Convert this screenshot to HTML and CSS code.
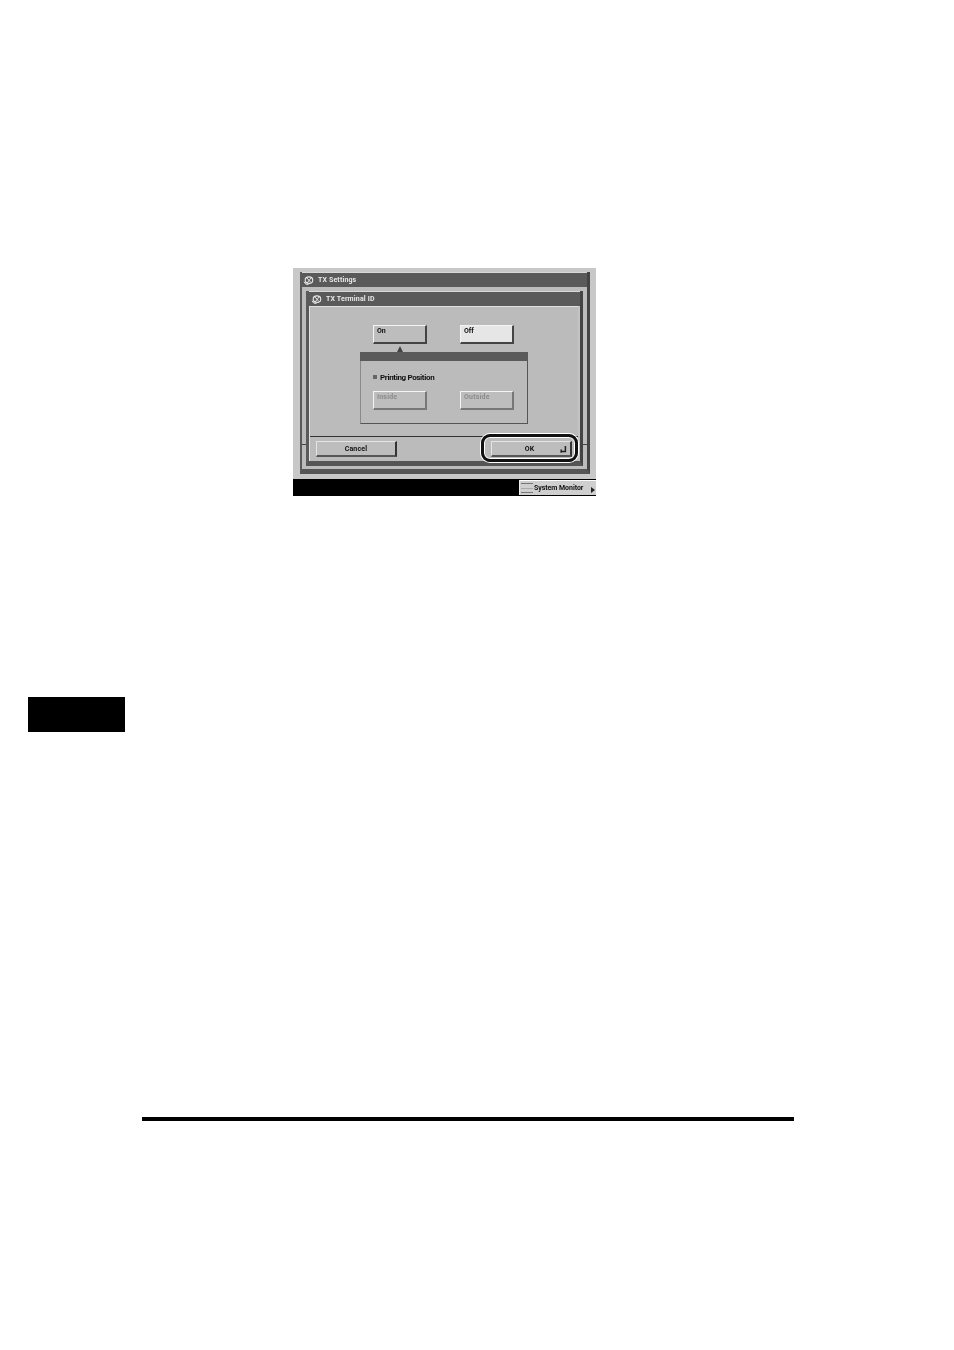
FILE: index.html
```html
<!DOCTYPE html>
<html lang="en">
<head>
    <meta charset="UTF-8">
    <meta name="viewport" content="width=device-width, initial-scale=1.0">
    <title>TX Terminal ID</title>
    <link rel="stylesheet" href="styles.css">
</head>
<body>
    <div class="screen">
        <div class="window-outer">
            <div class="title-bar title-outer">
                <svg class="logo" viewBox="0 0 12 10"><ellipse cx="6.5" cy="4.6" rx="4.2" ry="3.6" fill="none" stroke="#e8e8e8" stroke-width="1.2"/><path d="M4 2 L9 7.4 M9 2 L4.6 7.6 M1 6.4 L3 9 L6 9.4" fill="none" stroke="#e8e8e8" stroke-width="1.1"/></svg>
                <span>TX Settings</span>
            </div>
            <div class="window-outer-body">
                <div class="window-inner">
                    <div class="title-bar title-inner">
                        <svg class="logo" viewBox="0 0 12 10"><ellipse cx="6.5" cy="4.6" rx="4.2" ry="3.6" fill="none" stroke="#e8e8e8" stroke-width="1.2"/><path d="M4 2 L9 7.4 M9 2 L4.6 7.6 M1 6.4 L3 9 L6 9.4" fill="none" stroke="#e8e8e8" stroke-width="1.1"/></svg>
                        <span>TX Terminal ID</span>
                    </div>
                    <div class="content">
                        <div class="content-main">
                            <div class="button-row top-row">
                                <div class="btn">On</div>
                                <div class="btn btn-selected">Off</div>
                            </div>
                            <div class="pointer"></div>
                            <div class="sub-panel">
                                <div class="sub-header"></div>
                                <div class="sub-label"><span class="bullet"></span>Printing Position</div>
                                <div class="button-row sub-row">
                                    <div class="btn btn-disabled">Inside</div>
                                    <div class="btn btn-disabled">Outside</div>
                                </div>
                            </div>
                        </div>
                        <div class="footer">
                            <div class="btn btn-wide">Cancel</div>
                            <div class="btn btn-wide btn-ok">OK
                                <svg class="return-icon" viewBox="0 0 7 7"><path d="M5.4 0 V5.4 H0.6 M1.2 3.6 V6.8" fill="none" stroke="#222" stroke-width="1.5"/></svg>
                            </div>
                        </div>
                    </div>
                    <div class="callout"></div>
                </div>
                <div class="tick tick-left"></div>
                <div class="tick tick-right"></div>
            </div>
        </div>
        <div class="status-bar">
            <div class="monitor-btn">
                <span class="monitor-icon"></span>
                <span class="monitor-text">System Monitor</span>
                <span class="monitor-arrow"></span>
            </div>
        </div>
    </div>

    <div class="side-tab"></div>
    <div class="bottom-rule"></div>
</body>
</html>
```

FILE: styles.css
```css
body {
    margin: 0;
    padding: 268px 0 0;
    background-color: #fff;
    font-family: Roboto, "Liberation Sans", sans-serif;
}

.screen {
    width: 303px;
    height: 228px;
    margin-left: 293px;
    padding-top: 4px;
    box-sizing: border-box;
    background-color: #c8c8c8;
    display: flex;
    flex-direction: column;
    filter: blur(0.35px);
}

.window-outer {
    height: 202px;
    margin: 0 6px 0 7px;
    box-sizing: border-box;
    background-color: #bcbcbc;
    border-left: 2px solid #5a5a5a;
    border-right: 3px solid #444;
    border-bottom: 5px solid #555;
    display: flex;
    flex-direction: column;
}

.title-bar {
    display: flex;
    align-items: center;
    background-color: #5a5a5a;
    border-top: 1px solid #d8d8d8;
    color: #e8e8e8;
    font-size: 7px;
    font-weight: bold;
    letter-spacing: 0.15px;
    box-sizing: border-box;
}

.title-outer {
    height: 15px;
    padding-left: 1px;
}

.title-inner {
    height: 15px;
    padding-left: 2px;
}

.logo {
    width: 11px;
    height: 9px;
    margin-right: 4px;
}

.window-outer-body {
    position: relative;
    padding: 4px 4px 3px;
}

.window-inner {
    position: relative;
    height: 175px;
    box-sizing: border-box;
    background-color: #c4c4c4;
    border-left: 3px solid #5a5a5a;
    border-right: 3px solid #444;
    border-bottom: 5px solid #555;
    display: flex;
    flex-direction: column;
}

.content {
    flex: 1;
    margin-right: 2px;
    background-color: #bbb;
    border-top: 1px solid #e0e0e0;
    border-left: 1px solid #e0e0e0;
    display: flex;
    flex-direction: column;
}

.content-main {
    height: 129px;
    border-bottom: 1px solid #333;
}

.button-row {
    display: flex;
    gap: 33px;
}

.top-row {
    padding: 18px 0 0 63px;
}

.btn {
    width: 54px;
    height: 19px;
    box-sizing: border-box;
    padding: 1px 0 0 3px;
    background-color: #bdbdbd;
    border-top: 1px solid #f4f4f4;
    border-left: 1px solid #f4f4f4;
    border-right: 2px solid #444;
    border-bottom: 2px solid #444;
    color: #111;
    font-size: 7px;
    font-weight: bold;
    line-height: 8px;
}

.btn-selected {
    background-color: #e6e6e6;
}

.btn-disabled {
    color: #8c8c8c;
    letter-spacing: 0.2px;
    border-right-color: #777;
    border-bottom-color: #777;
}

.pointer {
    width: 0;
    height: 0;
    margin-left: 87px;
    margin-top: 2px;
    border-left: 3.5px solid transparent;
    border-right: 3.5px solid transparent;
    border-bottom: 6px solid #444;
}

.sub-panel {
    width: 168px;
    height: 72px;
    margin-left: 50px;
    box-sizing: border-box;
    border-left: 1px solid #8a8a8a;
    border-right: 1px solid #555;
    border-bottom: 1px solid #555;
}

.sub-header {
    height: 9px;
    margin-left: -1px;
    margin-right: -1px;
    background-color: #5a5a5a;
}

.sub-label {
    display: flex;
    align-items: center;
    height: 10px;
    margin: 11px 0 0 12px;
    color: #111;
    font-size: 8px;
    font-weight: bold;
    letter-spacing: -0.35px;
}

.bullet {
    width: 4px;
    height: 4px;
    margin-right: 3px;
    background-color: #666;
}

.sub-row {
    padding: 9px 0 0 12px;
}

.footer {
    display: flex;
    justify-content: space-between;
    padding: 4px 6px 0;
}

.btn-wide {
    position: relative;
    width: 81px;
    height: 16px;
    padding: 3px 0 0;
    text-align: center;
    border-top-color: #e4e4e4;
    border-left-color: #e4e4e4;
    border-right-color: #333;
    border-bottom-color: #555;
    letter-spacing: 0.2px;
}

.btn-ok {
    padding-right: 3px;
}

.return-icon {
    position: absolute;
    right: 3px;
    bottom: 2px;
    width: 7px;
    height: 7px;
}

/* black ring round the OK button */
.callout {
    position: absolute;
    left: 172px;
    top: 143px;
    width: 97px;
    height: 28px;
    box-sizing: border-box;
    border: 3px solid #111;
    border-radius: 9px;
    box-shadow: 0 0 0 1px #fff, inset 0 0 0 1px #fff;
}

.tick {
    position: absolute;
    top: 157px;
    height: 1px;
    background-color: #444;
}

.tick-left {
    left: 0;
    width: 4px;
}

.tick-right {
    right: 0;
    width: 4px;
}

.status-bar {
    flex: 1;
    margin-top: 5px;
    background-color: #000;
    display: flex;
    justify-content: flex-end;
    padding-top: 1px;
}

.monitor-btn {
    width: 77px;
    height: 15px;
    box-sizing: border-box;
    padding-left: 1px;
    background-color: #cfcfcf;
    border-top: 1px solid #fff;
    border-left: 1px solid #eee;
    display: flex;
    align-items: center;
    color: #111;
    font-size: 7px;
    font-weight: bold;
    letter-spacing: -0.05px;
}

.monitor-icon {
    width: 12px;
    height: 10px;
    margin-right: 1px;
    box-sizing: border-box;
    border-top: 1px solid #777;
    border-bottom: 1px solid #777;
    background: linear-gradient(#aaa, #aaa) center / 100% 1px no-repeat;
}

.monitor-text {
    flex: 1;
}

.monitor-arrow {
    width: 0;
    height: 0;
    margin: 4px 1px 0 0;
    border-top: 3px solid transparent;
    border-bottom: 3px solid transparent;
    border-left: 4px solid #222;
}

.side-tab {
    width: 97px;
    height: 35px;
    margin: 201px 0 0 28px;
    background-color: #000;
}

.bottom-rule {
    width: 652px;
    height: 4px;
    margin: 385px 0 0 142px;
    background-color: #000;
}
```
